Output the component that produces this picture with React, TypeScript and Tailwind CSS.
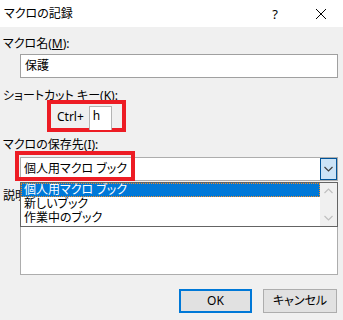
import React from "react";

function Chevron({ up = false, color }: { up?: boolean; color: string }) {
  return (
    <svg width="9" height="6" viewBox="0 0 9 6" className="block">
      <path
        d={up ? "M0.5 5 L4.5 1 L8.5 5" : "M0.5 1 L4.5 5 L8.5 1"}
        fill="none"
        stroke={color}
        strokeWidth="1.2"
      />
    </svg>
  );
}

const items = ["個人用マクロ ブック", "新しいブック", "作業中のブック"];

export default function App() {
  return (
    <div className="relative h-[320px] w-[343px] overflow-hidden bg-[#f0f0f0] font-['Noto_Sans','Noto_Sans_CJK_JP',sans-serif] text-[12px] text-black [font-feature-settings:'palt']">
      {/* Title bar */}
      <div className="flex h-[27px] items-center bg-white pl-[4px]">
        <span className="flex-1 leading-[16px]">マクロの記録</span>
        <span className="mr-[38px] text-[13px] leading-[16px]">?</span>
        <svg width="10" height="10" viewBox="0 0 10 10" className="mr-[17px]">
          <path d="M0 0 L10 10 M10 0 L0 10" stroke="#000" strokeWidth="1" />
        </svg>
      </div>

      <div className="flex flex-col pl-[3px]">
        <p className="mt-[9px] leading-[16px]">
          マクロ名(<span className="underline">M</span>):
        </p>
        <div className="ml-[17px] mt-[2px] flex h-[24px] w-[318px] items-center border border-[#a0a0a0] bg-white pl-[4px]">
          保護
        </div>

        <p className="mt-[10px] leading-[16px]">
          ショートカット キー(<span className="underline">K</span>):
        </p>
        {/* highlighted shortcut */}
        <div className="ml-[44px] mt-[-4px] flex h-[32px] w-[79px] border-4 border-[#ed1c24]">
          <span className="flex items-center pl-[6px] pt-[2px]">Ctrl+</span>
          <div className="ml-[5px] mt-[2px] flex h-[24px] w-[23px] items-start border border-b-0 border-[#b4b4b4] bg-white pl-[3px] leading-[18px]">
            h
          </div>
        </div>

        <p className="mt-[5px] leading-[16px]">マクロの保存先(I):</p>
        <div className="relative ml-[17px] mt-[4px] w-[318px]">
          <div className="flex h-[24px] items-stretch border border-[#adadad] bg-white">
            <span className="flex flex-1 items-center pl-[3px]">個人用マクロ ブック</span>
            <div className="flex w-[17px] items-center justify-center border border-[#005499] bg-[#cce4f7]">
              <Chevron color="#404040" />
            </div>
          </div>
          {/* red highlight */}
          <div className="absolute left-[-5px] top-[-6px] h-[30px] w-[120px] border-4 border-[#ed1c24]" />
          {/* open list */}
          <div className="absolute left-0 top-[25px] z-10 flex h-[45px] w-[318px] border border-[#646464] bg-white">
            <div className="flex flex-1 flex-col">
              {items.map((t, i) => (
                <div
                  key={t}
                  className={
                    i === 0
                      ? "flex h-[14px] items-center border border-dotted border-[#f08c28] bg-[#0078d7] pl-[2px] leading-[12px] text-white"
                      : "flex h-[14px] items-center pl-[3px] leading-[14px]"
                  }
                >
                  {t}
                </div>
              ))}
            </div>
            <div className="flex w-[17px] flex-col items-center justify-between bg-[#f0f0f0] py-[5px]">
              <Chevron up color="#c0c0c0" />
              <Chevron color="#c0c0c0" />
            </div>
          </div>
        </div>

        {/* label partly hidden behind the open list */}
        <p className="mt-[7px] w-[17px] overflow-hidden whitespace-nowrap leading-[16px]">
          説明
        </p>
        <div className="ml-[17px] mt-[2px] h-[69px] w-[318px] border border-[#adadad] bg-white" />

        <div className="mt-[14px] flex justify-end gap-[11px] pr-[6px]">
          <button className="flex h-[24px] w-[73px] items-center justify-center border-2 border-[#0078d7] bg-[#e1e1e1]">
            OK
          </button>
          <button className="flex h-[24px] w-[74px] items-center justify-center border border-[#adadad] bg-[#e1e1e1]">
            キャンセル
          </button>
        </div>
      </div>
    </div>
  );
}
